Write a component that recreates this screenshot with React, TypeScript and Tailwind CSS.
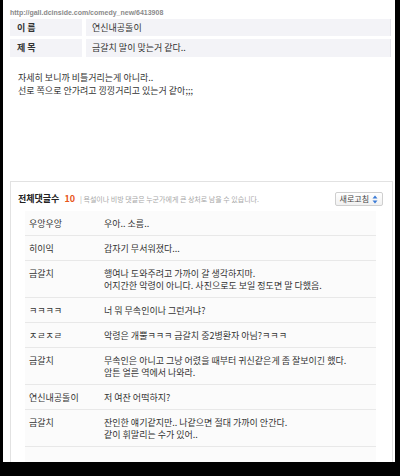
import React from "react";

const comments: { name: string; lines: string[] }[] = [
  { name: "우앙우앙", lines: ["우아.. 소름.."] },
  { name: "히이익", lines: ["갑자기 무서워졌다..."] },
  {
    name: "금갈치",
    lines: [
      "행여나 도와주려고 가까이 갈 생각하지마.",
      "어지간한 악령이 아니다. 사진으로도 보일 정도면 말 다했음.",
    ],
  },
  { name: "ㅋㅋㅋㅋ", lines: ["너 뭐 무속인이나 그런거냐?"] },
  { name: "ㅈㄹㅈㄹ", lines: ["악령은 개뿔ㅋㅋㅋ 금갈치 중2병환자 아님?ㅋㅋㅋ"] },
  {
    name: "금갈치",
    lines: [
      "무속인은 아니고 그냥 어렸을 때부터 귀신같은게 좀 잘보이긴 했다.",
      "암튼 얼른 역에서 나와라.",
    ],
  },
  { name: "연신내공돌이", lines: ["저 여잔 어떡하지?"] },
  {
    name: "금갈치",
    lines: ["잔인한 얘기같지만.. 나같으면 절대 가까이 안간다.", "같이 휘말리는 수가 있어.."],
  },
];

const RefreshIcon: React.FC = () => (
  <svg width="6" height="9" viewBox="0 0 6 9" className="ml-[3px]">
    <path d="M3 0.5 L5.5 3.5 H0.5 Z" fill="#3b7bd6" />
    <path d="M3 8.5 L5.5 5.5 H0.5 Z" fill="#3b7bd6" />
  </svg>
);

const App: React.FC = () => {
  return (
    <div
      className="w-[400px] h-[476px] bg-black overflow-hidden"
      style={{ fontFamily: '"Noto Sans CJK KR", "Liberation Sans", sans-serif' }}
    >
      <div className="ml-[3px] mr-[5px] h-[462px] bg-white overflow-hidden flex flex-col">
        {/* URL */}
        <div
          className="pl-[7px] pt-[9px] h-[19px] text-[7px] leading-[8px] font-bold text-[#8a8a8a]"
          style={{ fontFamily: '"Liberation Sans", sans-serif' }}
        >
          http://gall.dcinside.com/comedy_new/6413908
        </div>

        {/* Info table */}
        <div className="ml-[7px] mr-[4px] flex flex-col gap-[3px]">
          <div className="flex gap-[4px] h-[17px]">
            <div className="w-[72px] bg-[#f3f3f7] pl-[7px] flex items-center text-[9px] font-bold text-[#333]">
              이 름
            </div>
            <div className="flex-1 bg-[#f3f3f7] border-r border-[#e4e4ea] pl-[6px] flex items-center text-[9px] text-[#333]">
              연신내공돌이
            </div>
          </div>
          <div className="flex gap-[4px] h-[18px]">
            <div className="w-[72px] bg-[#f3f3f7] pl-[7px] flex items-center text-[9px] font-bold text-[#333]">
              제 목
            </div>
            <div className="flex-1 bg-[#f3f3f7] border-r border-[#e4e4ea] pl-[6px] flex items-center text-[9px] text-[#333]">
              금갈치 말이 맞는거 같다..
            </div>
          </div>
        </div>

        {/* Body */}
        <div className="pl-[15px] pt-[14px] h-[124px] text-[9px] leading-[13px] text-[#333]">
          <p>자세히 보니까 비틀거리는게 아니라..</p>
          <p>선로 쪽으로 안가려고 낑낑거리고 있는거 같아;;;</p>
        </div>

        {/* Comment box */}
        <div className="ml-[7px] mr-[2px] flex-1 border border-[#e2e2e2] border-b-0 flex flex-col">
          <div className="h-[27px] pl-[7px] pr-[9px] pt-[10px] flex items-start justify-between">
            <div className="flex items-center h-[14px]">
              <span className="text-[9px] font-bold text-[#222]">전체댓글수</span>
              <span className="ml-[5px] text-[9px] font-bold text-[#e8561c]">10</span>
              <span className="ml-[5px] text-[7px] text-[#a8a8a8]">
                | 욕설이나 비방 댓글은 누군가에게 큰 상처로 남을 수 있습니다.
              </span>
            </div>
            <div className="h-[14px] px-[4px] flex items-center border border-[#cfcfcf] rounded-[2px] bg-gradient-to-b from-white to-[#f1f1f1] text-[8px] text-[#444]">
              새로고침
              <RefreshIcon />
            </div>
          </div>

          <div className="mt-[2px] ml-[14px] mr-[16px] flex-1 bg-[#fbfbfb]">
            {comments.map((c, i) => (
              <div
                key={i}
                className="flex pt-[7px] pb-[5px] border-b border-[#e8e8e8] text-[9px] leading-[12px] text-[#333]"
              >
                <div className="w-[79px] pl-[4px] shrink-0">{c.name}</div>
                <div className="flex-1">
                  {c.lines.map((l, j) => (
                    <p key={j}>{l}</p>
                  ))}
                </div>
              </div>
            ))}
          </div>
        </div>
      </div>
    </div>
  );
};

export default App;
